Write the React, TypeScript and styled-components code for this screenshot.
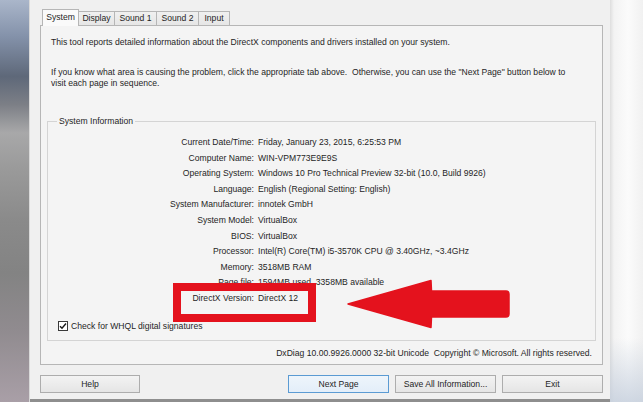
import React from "react";
import styled, { createGlobalStyle, css } from "styled-components";

const Global = createGlobalStyle`
  html, body { margin: 0; padding: 0; }
  body {
    width: 643px;
    height: 402px;
    overflow: hidden;
    font-family: "Liberation Sans", Arial, sans-serif;
    font-size: 8.6px;
    color: #1f1f1f;
    background: #f0f0f0;
  }
  * { box-sizing: border-box; }
`;

const Screen = styled.div`
  position: relative;
  display: flex;
  width: 643px;
  height: 402px;
  overflow: hidden;
`;

const DesktopLeft = styled.div`
  width: 30px;
  flex: none;
  background: linear-gradient(
    180deg,
    #aab6ca 0%,
    #8492aa 9%,
    #5e6879 19%,
    #7c7f86 26%,
    #a8a8a9 33%,
    #9a9a9a 42%,
    #8a8a8a 55%,
    #838383 68%,
    #908b8f 82%,
    #a99fa7 100%
  );
  box-shadow: inset -1px 0 0 #d9d9d9;
`;

const DesktopRight = styled.div`
  flex: 1;
  background:
    linear-gradient(180deg, rgba(255,255,255,0) 84%, rgba(196,206,220,0.8) 100%),
    linear-gradient(90deg, #dedede 0, #f3f3f3 4px, #fbfbfb 55%, #f1f1f1 100%);
`;

const Window = styled.div`
  width: 580px;
  flex: none;
  display: flex;
  flex-direction: column;
  background: #f0f0f0;
  padding: 9px 7px 0 10px;
  border-bottom: 3px solid #8e8e8e;
`;

const TabBar = styled.div`
  display: flex;
  align-items: flex-end;
  height: 16px;
  margin-left: 2px;
  position: relative;
  z-index: 1;
`;

const Tab = styled.div<{ $w: number; $active?: boolean }>`
  width: ${(p) => p.$w}px;
  height: 14px;
  margin-left: -1px;
  border: 1px solid #b6b6b6;
  border-bottom: none;
  background: linear-gradient(180deg, #f0f0f0, #e6e6e6);
  display: flex;
  align-items: center;
  justify-content: center;
  line-height: 11px;
  &:first-child { margin-left: 0; }
  ${(p) =>
    p.$active &&
    css`
      height: 17px;
      margin-bottom: -1px;
      background: #fafafa;
      padding-bottom: 2px;
      z-index: 2;
    `}
`;

const Panel = styled.div`
  height: 340px;
  border: 1px solid #b6b6b6;
  background: #f4f4f4;
  display: flex;
  flex-direction: column;
  padding: 11px 6px 0 6px;
`;

const Para = styled.p<{ $gap?: number }>`
  margin: ${(p) => p.$gap ?? 0}px 0 0 0;
  padding: 0 4px;
  line-height: 11px;
  white-space: nowrap;
`;

const Group = styled.fieldset`
  margin: 27px 0 0 0;
  padding: 8px 0 8px 0;
  border: 1px solid #d4d4d4;
  min-width: 0;
`;

const Legend = styled.legend`
  margin-left: 9px;
  padding: 0 2px;
  line-height: 11px;
`;

const InfoGrid = styled.div`
  display: grid;
  grid-template-columns: 206px 1fr;
  grid-auto-rows: 15.6px;
  column-gap: 4px;
  line-height: 15.6px;
`;

const Label = styled.div`
  text-align: right;
  white-space: nowrap;
`;

const Value = styled.div`
  white-space: nowrap;
`;

const CheckRow = styled.label`
  display: flex;
  align-items: center;
  gap: 3px;
  margin-top: 14px;
  padding-left: 10px;
  line-height: 11px;
`;

const CheckBox = styled.span`
  width: 10px;
  height: 10px;
  border: 1px solid #3a3a3a;
  background: #fff;
  display: flex;
  align-items: center;
  justify-content: center;
`;

const Footer = styled.p`
  margin: 7px 0 0 0;
  padding: 0 4px;
  text-align: right;
  line-height: 11px;
  white-space: nowrap;
`;

const ButtonRow = styled.div`
  margin-top: 10px;
  display: flex;
  justify-content: space-between;
`;

const ButtonGroup = styled.div`
  display: flex;
  gap: 6px;
`;

const Button = styled.button<{ $w: number; $primary?: boolean }>`
  width: ${(p) => p.$w}px;
  height: 18px;
  padding: 0;
  font: inherit;
  color: #1f1f1f;
  border: 1px solid #adadad;
  border-radius: 0;
  background: linear-gradient(180deg, #f3f3f3, #e5e5e5);
  ${(p) =>
    p.$primary &&
    css`
      border-color: #5b9bd3;
      background: linear-gradient(180deg, #eef5fb, #e3eef9);
    `}
`;

const HighlightBox = styled.div`
  position: absolute;
  left: 173px;
  top: 283px;
  width: 143px;
  height: 39px;
  border: 8px solid #e4121d;
`;

const ArrowSvg = styled.svg`
  position: absolute;
  left: 340px;
  top: 276px;
`;

const rows: [string, string][] = [
  ["Current Date/Time:", "Friday, January 23, 2015, 6:25:53 PM"],
  ["Computer Name:", "WIN-VPM773E9E9S"],
  ["Operating System:", "Windows 10 Pro Technical Preview 32-bit (10.0, Build 9926)"],
  ["Language:", "English (Regional Setting: English)"],
  ["System Manufacturer:", "innotek GmbH"],
  ["System Model:", "VirtualBox"],
  ["BIOS:", "VirtualBox"],
  ["Processor:", "Intel(R) Core(TM) i5-3570K CPU @ 3.40GHz, ~3.4GHz"],
  ["Memory:", "3518MB RAM"],
  ["Page file:", "1594MB used, 3358MB available"],
  ["DirectX Version:", "DirectX 12"],
];

const tabs: [string, number][] = [
  ["System", 37],
  ["Display", 37],
  ["Sound 1", 43],
  ["Sound 2", 43],
  ["Input", 32],
];

export default function App() {
  return (
    <>
      <Global />
      <Screen>
        <DesktopLeft />
        <Window>
          <TabBar>
            {tabs.map(([t, w], i) => (
              <Tab key={t} $w={w} $active={i === 0}>
                {t}
              </Tab>
            ))}
          </TabBar>
          <Panel>
            <Para>
              This tool reports detailed information about the DirectX components and drivers installed on your system.
            </Para>
            <Para $gap={19}>
              If you know what area is causing the problem, click the appropriate tab above.&nbsp; Otherwise, you can use the "Next Page" button below to
              <br />
              visit each page in sequence.
            </Para>
            <Group>
              <Legend>System Information</Legend>
              <InfoGrid>
                {rows.map(([l, v]) => (
                  <React.Fragment key={l}>
                    <Label>{l}</Label>
                    <Value>{v}</Value>
                  </React.Fragment>
                ))}
              </InfoGrid>
              <CheckRow>
                <CheckBox>
                  <svg width="8" height="8" viewBox="0 0 8 8">
                    <path d="M1 4.2 L3 6.3 L7 1.5" fill="none" stroke="#1a1a1a" strokeWidth="1.4" />
                  </svg>
                </CheckBox>
                Check for WHQL digital signatures
              </CheckRow>
            </Group>
            <Footer>
              DxDiag 10.00.9926.0000 32-bit Unicode&nbsp; Copyright © Microsoft. All rights reserved.
            </Footer>
          </Panel>
          <ButtonRow>
            <Button $w={100}>Help</Button>
            <ButtonGroup>
              <Button $w={101} $primary>
                Next Page
              </Button>
              <Button $w={101}>Save All Information...</Button>
              <Button $w={101}>Exit</Button>
            </ButtonGroup>
          </ButtonRow>
        </Window>
        <DesktopRight />
        <HighlightBox />
        <ArrowSvg width="175" height="56" viewBox="0 0 175 56">
          <path
            d="M8 28 L91 4.5 L91.5 15 L166 15 Q169 15 169 18 L169 38 Q169 41 166 41 L91.5 41 L91 51.5 Z"
            fill="#e4121d"
            stroke="#e4121d"
            strokeWidth="1.5"
            strokeLinejoin="round"
          />
        </ArrowSvg>
      </Screen>
    </>
  );
}
